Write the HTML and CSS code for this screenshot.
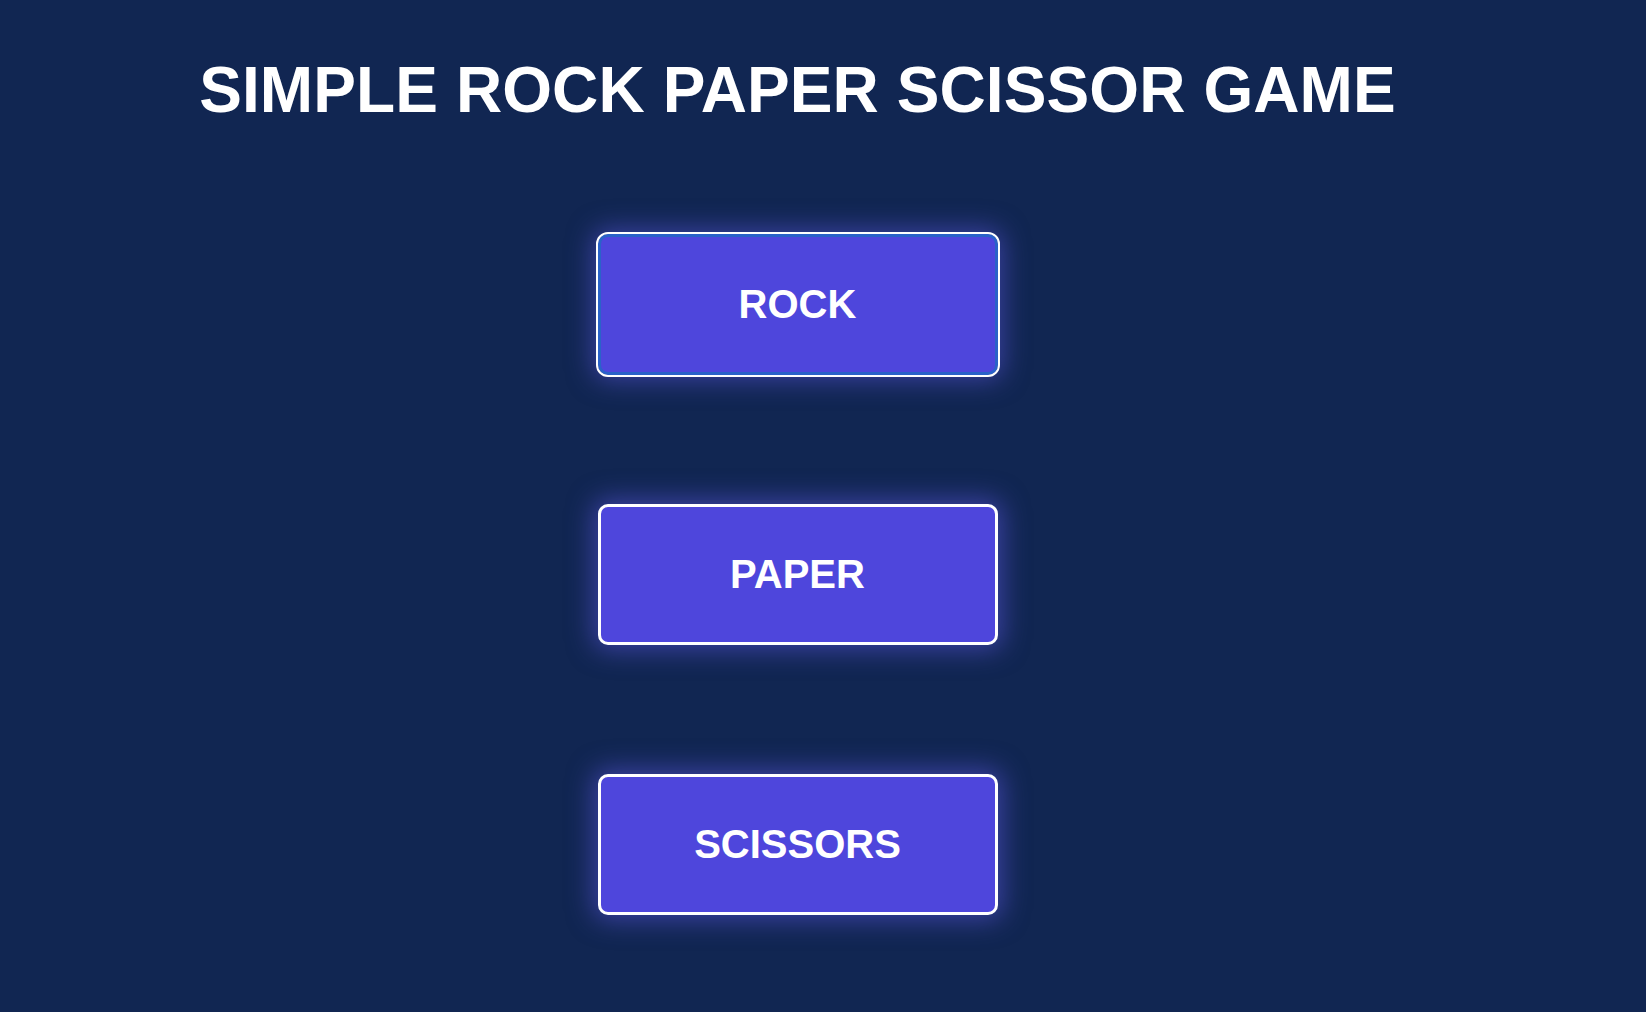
FILE: index.html
```html
<!DOCTYPE html>
<html lang="en">
<head>
<meta charset="utf-8">
<title>Simple Rock Paper Scissor Game</title>
<link rel="stylesheet" href="styles.css">
</head>
<body>
<main class="page">
  <h1 class="title">SIMPLE ROCK PAPER SCISSOR GAME</h1>
  <div class="choices">
    <button class="choice choice-focused" type="button">ROCK</button>
    <button class="choice" type="button">PAPER</button>
    <button class="choice" type="button">SCISSORS</button>
  </div>
</main>
</body>
</html>
```

FILE: styles.css
```css
html, body {
  margin: 0;
  padding: 0;
  height: 100%;
}

body {
  background: #112652;
  font-family: "Liberation Sans", Arial, Helvetica, sans-serif;
  color: #ffffff;
}

.page {
  display: flex;
  flex-direction: column;
  align-items: center;
  padding-right: 51px;
  padding-top: 58px;
}

.title {
  margin: 0;
  font-size: 64px;
  line-height: 64px;
  font-weight: 700;
  letter-spacing: 0.1px;
  white-space: nowrap;
}

.choices {
  display: flex;
  flex-direction: column;
  align-items: center;
  gap: 129px;
  margin-top: 112px;
}

.choice {
  box-sizing: border-box;
  width: 400px;
  height: 141px;
  background: #4e46dc;
  border: 3px solid #ffffff;
  border-radius: 10px;
  color: #ffffff;
  font-family: "Liberation Sans", Arial, Helvetica, sans-serif;
  font-size: 40px;
  font-weight: 700;
  box-shadow: 0 0 26px 5px rgba(100, 92, 240, 0.5);
  cursor: pointer;
  padding: 0;
}

.choice-focused {
  border-color: #2a62c9;
  outline: 2px solid #ffffff;
  outline-offset: 0;
}
```
